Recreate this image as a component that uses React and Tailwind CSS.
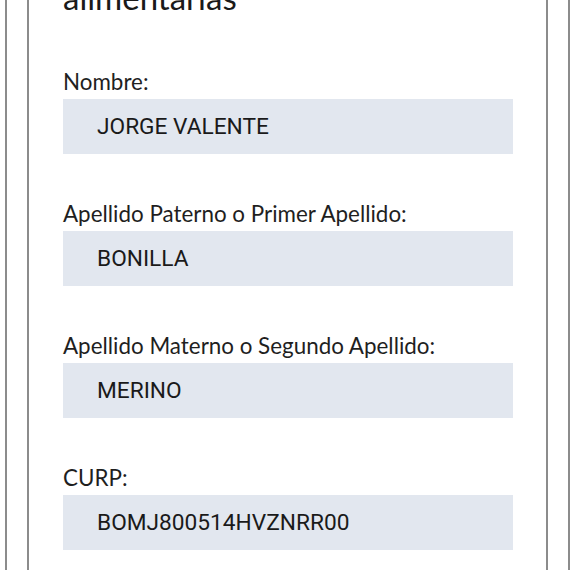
export default function App() {
  const fields = [
    ["Nombre:", "JORGE VALENTE"],
    ["Apellido Paterno o Primer Apellido:", "BONILLA"],
    ["Apellido Materno o Segundo Apellido:", "MERINO"],
    ["CURP:", "BOMJ800514HVZNRR00"],
  ];
  return (
    <div className="flex h-[570px] w-[576px] overflow-hidden bg-white">
      <div className="ml-[5px] flex h-full w-[565px] border-x-2 border-[#8c8c8c]">
        <div className="ml-[20px] flex h-full w-[521px] flex-col border-x-2 border-[#8c8c8c] pl-[34px] pr-[33px]">
          <h1
            className="mt-[-23px] text-[33px] leading-[40px] text-[#1a1a1a]"
            style={{ fontFamily: "Lato, sans-serif" }}
          >
            alimentarias
          </h1>
          <div className="mt-[51px] flex flex-col gap-[46px]">
            {fields.map(([label, value]) => (
              <div key={label} className="flex flex-col">
                <label
                  className="mb-[3px] text-[22.4px] leading-[28px] text-[#1f1f1f]"
                  style={{ fontFamily: "Lato, sans-serif" }}
                >
                  {label}
                </label>
                <div
                  className="flex h-[55px] items-center bg-[#e2e7ef] pl-[34px] text-[22.7px] leading-[26px] text-[#1a1a1a]"
                  style={{ fontFamily: "Roboto, sans-serif" }}
                >
                  {value}
                </div>
              </div>
            ))}
          </div>
        </div>
      </div>
    </div>
  );
}
